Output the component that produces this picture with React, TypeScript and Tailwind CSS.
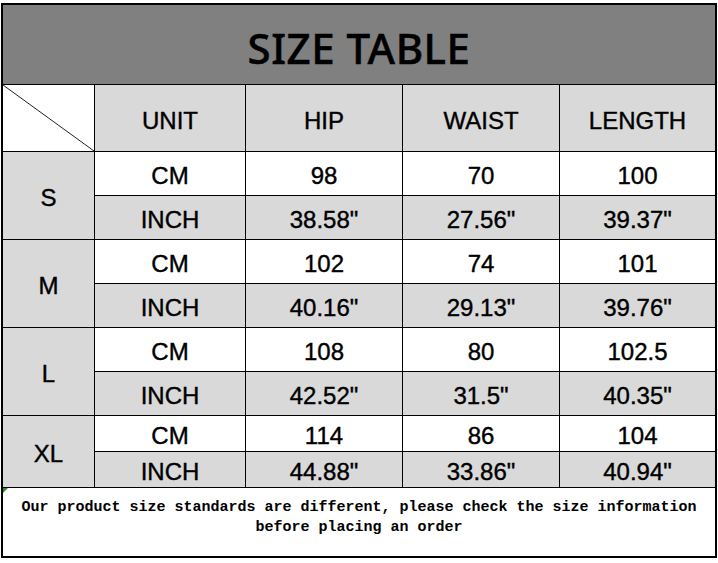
import React from "react"

type SizeRow = {
  size: string
  cm: string[]
  inch: string[]
}

const sizes: SizeRow[] = [
  { size: "S", cm: ["98", "70", "100"], inch: ['38.58"', '27.56"', '39.37"'] },
  { size: "M", cm: ["102", "74", "101"], inch: ['40.16"', '29.13"', '39.76"'] },
  { size: "L", cm: ["108", "80", "102.5"], inch: ['42.52"', '31.5"', '40.35"'] },
  { size: "XL", cm: ["114", "86", "104"], inch: ['44.88"', '33.86"', '40.94"'] },
]

const cell =
  "flex items-center justify-center pt-[5px] text-[24px] leading-none text-black [-webkit-text-stroke:0.4px_black]"

export default function App() {
  return (
    <div className="min-h-[563px] w-[718px] bg-white pl-px pt-[3px] font-['Liberation_Sans',Arial,sans-serif]">
      <div
        className="grid w-[716px] gap-px border-2 border-black bg-black"
        style={{
          gridTemplateColumns: "91px 150px 156px 156px 155px",
          gridTemplateRows: "79px 66px 43px 43px 43px 43px 43px 43px 35px 35px 68px",
        }}
      >
        {/* title */}
        <div className="col-span-5 flex items-center justify-center bg-[#808080] pt-[6px]">
          <span className="font-['Noto_Sans',sans-serif] text-[42px] font-medium leading-none tracking-[0.5px] text-black [-webkit-text-stroke:0.5px_black]">
            SIZE TABLE
          </span>
        </div>

        {/* header */}
        <div className="relative bg-white">
          <svg className="absolute inset-0 h-full w-full" viewBox="0 0 91 66" preserveAspectRatio="none">
            <line x1="0" y1="0" x2="91" y2="66" stroke="#222" strokeWidth="1" />
          </svg>
        </div>
        {["UNIT", "HIP", "WAIST", "LENGTH"].map((h) => (
          <div key={h} className={`${cell} bg-[#d9d9d9]`}>
            {h}
          </div>
        ))}

        {/* size rows */}
        {sizes.map((s, i) => (
          <React.Fragment key={s.size}>
            <div
              className={`${cell} row-span-2 bg-[#d9d9d9]`}
              style={{ gridRowStart: 3 + i * 2 }}
            >
              {s.size}
            </div>
            <div className={`${cell} bg-white`}>CM</div>
            {s.cm.map((v, j) => (
              <div key={"c" + j} className={`${cell} bg-white`}>
                {v}
              </div>
            ))}
            <div className={`${cell} bg-[#d9d9d9]`}>INCH</div>
            {s.inch.map((v, j) => (
              <div key={"i" + j} className={`${cell} bg-[#d9d9d9]`}>
                {v}
              </div>
            ))}
          </React.Fragment>
        ))}

        {/* footer note */}
        <div className="relative col-span-5 bg-white pt-[10px] text-center font-['Liberation_Mono',monospace] text-[15px] font-bold leading-[20px] text-black">
          <span className="absolute left-0 top-0 h-0 w-0 border-r-[5px] border-t-[5px] border-r-transparent border-t-[#2e8b2e]" />
          Our product size standards are different, please check the size information
          <br />
          before placing an order
        </div>
      </div>
    </div>
  )
}
